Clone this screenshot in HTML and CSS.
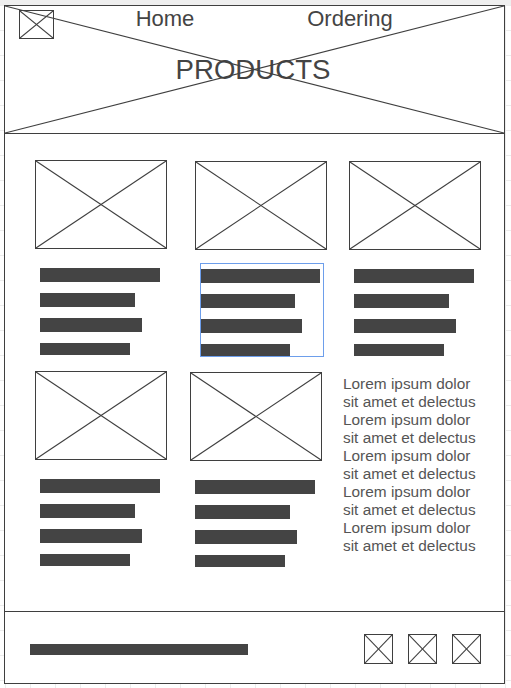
FILE: index.html
```html
<!doctype html>
<html lang="en">
  <head>
    <meta charset="utf-8">
    <meta name="viewport" content="width=device-width, initial-scale=1">
    <title>Products wireframe</title>
    <link rel="stylesheet" href="styles.css">
  </head>
  <body>
    <div class="frame">
      <header class="header">
        <svg class="cross" viewBox="0 0 100 100" preserveAspectRatio="none">
          <line x1="0" y1="0" x2="100" y2="100" />
          <line x1="0" y1="100" x2="100" y2="0" />
        </svg>
        <div class="head-row">
          <div class="ph logo">
            <svg viewBox="0 0 100 100" preserveAspectRatio="none"><line x1="0" y1="0" x2="100" y2="100" /><line x1="0" y1="100" x2="100" y2="0" /></svg>
          </div>
          <nav class="nav">
            <a class="nav-link" href="#">Home</a>
            <a class="nav-link" href="#">Ordering</a>
          </nav>
        </div>
        <h1 class="title">PRODUCTS</h1>
      </header>

      <main class="main">
        <div class="row row-top">
          <div class="card">
            <div class="ph"><svg viewBox="0 0 100 100" preserveAspectRatio="none"><line x1="0" y1="0" x2="100" y2="100" /><line x1="0" y1="100" x2="100" y2="0" /></svg></div>
            <div class="bars"><span class="bar"></span><span class="bar"></span><span class="bar"></span><span class="bar"></span></div>
          </div>
          <div class="card card-low">
            <div class="ph"><svg viewBox="0 0 100 100" preserveAspectRatio="none"><line x1="0" y1="0" x2="100" y2="100" /><line x1="0" y1="100" x2="100" y2="0" /></svg></div>
            <div class="bars selected"><span class="bar"></span><span class="bar"></span><span class="bar"></span><span class="bar"></span></div>
          </div>
          <div class="card card-low">
            <div class="ph"><svg viewBox="0 0 100 100" preserveAspectRatio="none"><line x1="0" y1="0" x2="100" y2="100" /><line x1="0" y1="100" x2="100" y2="0" /></svg></div>
            <div class="bars"><span class="bar"></span><span class="bar"></span><span class="bar"></span><span class="bar"></span></div>
          </div>
        </div>

        <div class="row row-bottom">
          <div class="card">
            <div class="ph"><svg viewBox="0 0 100 100" preserveAspectRatio="none"><line x1="0" y1="0" x2="100" y2="100" /><line x1="0" y1="100" x2="100" y2="0" /></svg></div>
            <div class="bars"><span class="bar"></span><span class="bar"></span><span class="bar"></span><span class="bar"></span></div>
          </div>
          <div class="card card-low">
            <div class="ph"><svg viewBox="0 0 100 100" preserveAspectRatio="none"><line x1="0" y1="0" x2="100" y2="100" /><line x1="0" y1="100" x2="100" y2="0" /></svg></div>
            <div class="bars"><span class="bar"></span><span class="bar"></span><span class="bar"></span><span class="bar"></span></div>
          </div>
          <p class="lorem">
            Lorem ipsum dolor<br>sit amet et delectus<br>
            Lorem ipsum dolor<br>sit amet et delectus<br>
            Lorem ipsum dolor<br>sit amet et delectus<br>
            Lorem ipsum dolor<br>sit amet et delectus<br>
            Lorem ipsum dolor<br>sit amet et delectus
          </p>
        </div>
      </main>

      <footer class="footer">
        <span class="foot-bar"></span>
        <div class="icons">
          <div class="ph icon"><svg viewBox="0 0 100 100" preserveAspectRatio="none"><line x1="0" y1="0" x2="100" y2="100" /><line x1="0" y1="100" x2="100" y2="0" /></svg></div>
          <div class="ph icon"><svg viewBox="0 0 100 100" preserveAspectRatio="none"><line x1="0" y1="0" x2="100" y2="100" /><line x1="0" y1="100" x2="100" y2="0" /></svg></div>
          <div class="ph icon"><svg viewBox="0 0 100 100" preserveAspectRatio="none"><line x1="0" y1="0" x2="100" y2="100" /><line x1="0" y1="100" x2="100" y2="0" /></svg></div>
        </div>
      </footer>
    </div>
  </body>
</html>
```

FILE: styles.css
```css
html {
     background-color: #fff;
     background-image:
          linear-gradient(to right, #ececec 1px, transparent 1px),
          linear-gradient(to bottom, #ececec 1px, transparent 1px);
     background-size: 25px 25px;
     background-position: 5px 5px;
}
body {
     margin: 0;
     border-top: 5px solid #efefef;
     font-family: "Liberation Sans", Arial, sans-serif;
     color: #444;
}
.frame {
     box-sizing: border-box;
     width: 501px;
     height: 679px;
     margin-left: 4px;
     border: 1px solid #3f3f3f;
     background: #fff;
     display: flex;
     flex-direction: column;
}

/* placeholder boxes with the X */
.ph {
     box-sizing: border-box;
     border: 1px solid #3f3f3f;
     height: 89px;
}
.ph svg,
.cross {
     display: block;
     width: 100%;
     height: 100%;
}
line {
     stroke: #3f3f3f;
     stroke-width: 1.1;
     vector-effect: non-scaling-stroke;
}

/* header */
.header {
     position: relative;
     box-sizing: border-box;
     height: 128px;
     flex: none;
     border-bottom: 1px solid #3f3f3f;
     padding: 2px 0 0 14px;
}
.cross {
     position: absolute;
     left: 0;
     top: 0;
     pointer-events: none;
}
.head-row {
     display: flex;
     align-items: flex-start;
}
.logo {
     width: 35px;
     height: 29px;
     margin-top: 2px;
}
.nav {
     display: flex;
     gap: 65px;
     margin-left: 51px;
}
.nav-link {
     width: 120px;
     text-align: center;
     font-size: 22px;
     line-height: 22px;
     color: #444;
     text-decoration: none;
}
.title {
     margin: 17px 17px 0 0;
     text-align: center;
     font-size: 27.6px;
     line-height: 28px;
     font-weight: 400;
}

/* products */
.main {
     flex: 1;
     padding: 26px 0 0 30px;
}
.row {
     display: grid;
     align-items: start;
}
.row-top {
     grid-template-columns: 160px 154px 132px;
}
.row-bottom {
     grid-template-columns: 155px 153px auto;
     margin-top: 15px;
}
.card {
     width: 132px;
}
.card-low {
     margin-top: 1px;
}
.bars {
     display: flex;
     flex-direction: column;
     gap: 11px;
     margin-top: 19px;
     padding-left: 5px;
}
.bar {
     display: block;
     height: 14px;
     background: #444;
}
.bar:nth-child(1) { width: 120px; }
.bar:nth-child(2) { width: 95px; }
.bar:nth-child(3) { width: 102px; }
.bar:nth-child(4) { width: 90px; height: 12px; }
.selected {
     position: relative;
}
.selected::after {
     content: "";
     position: absolute;
     box-sizing: border-box;
     left: 5px;
     top: -6px;
     width: 124px;
     height: 94px;
     border: 1px solid #6d9eeb;
}
.lorem {
     margin: 4px 0 0 0;
     font-size: 15.4px;
     line-height: 18px;
     color: #555;
}

/* footer */
.footer {
     box-sizing: border-box;
     height: 72px;
     flex: none;
     border-top: 1px solid #3f3f3f;
     display: flex;
     align-items: center;
     padding: 3px 23px 0 25px;
}
.foot-bar {
     width: 218px;
     height: 11px;
     background: #444;
}
.icons {
     display: flex;
     gap: 15px;
     margin-left: auto;
}
.icon {
     width: 29px;
     height: 30px;
}
```
